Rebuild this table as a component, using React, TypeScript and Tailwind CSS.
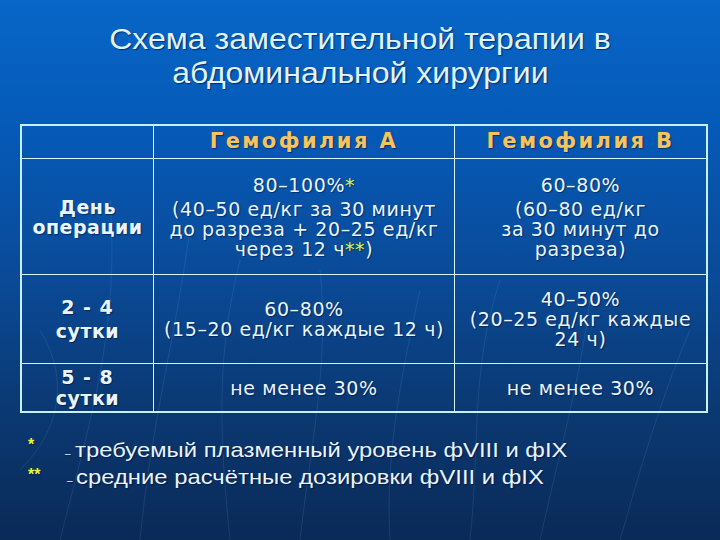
import React from 'react';

const Star = ({ children }: { children: React.ReactNode }) => (
  <span className="text-[#dcff3a]">{children}</span>
);

// faint curved streaks in the slide background
const BackgroundLines = () => (
  <svg className="absolute inset-0 pointer-events-none" width="720" height="540" viewBox="0 0 720 540">
    <g fill="none" stroke="#7fb2ff" strokeOpacity="0.14" strokeWidth="1">
      <path d="M60 540 C 90 420, 120 330, 110 200" />
      <path d="M140 540 C 150 430, 175 340, 190 230" />
      <path d="M230 540 C 220 440, 215 360, 240 260" />
      <path d="M300 540 C 310 450, 330 360, 320 270" />
      <path d="M390 540 C 385 460, 400 380, 420 290" />
      <path d="M470 540 C 480 450, 470 370, 500 280" />
      <path d="M540 540 C 560 450, 580 380, 590 300" />
      <path d="M620 540 C 640 470, 660 400, 690 330" />
      <path d="M20 470 C 60 430, 70 380, 40 330" />
    </g>
  </svg>
);

const cell = 'flex items-center justify-center text-center';
const line = 'border-[#d4f4ff]';
const body = 'text-[19px] leading-[20px] tracking-[0.6px]';

export default function App() {
  return (
    <div className="relative w-[720px] h-[540px] overflow-hidden bg-[linear-gradient(180deg,#0766c8_0%,#0659b6_25%,#0a4b99_50%,#0b3973_75%,#0a2a57_100%)]">
      <BackgroundLines />
      <div className="relative flex flex-col">
        <h1 className="pt-[22px] text-center text-[30px] leading-[34px] text-[#e0f3ff] font-['Liberation_Sans',sans-serif] [text-shadow:1px_1px_1px_rgba(0,0,40,0.5)]">
          <span className="inline-block scale-x-[1.067]">Схема заместительной терапии в</span>
          <br />
          <span className="inline-block scale-x-[1.067]">абдоминальной хирургии</span>
        </h1>

        <div className="mt-[34px] ml-[20px] w-[688px] border-2 border-[#c4f2ff] font-['DejaVu_Sans',sans-serif] text-[#eaf6ff] [text-shadow:1px_1px_1px_rgba(0,0,40,0.45)] grid grid-cols-[132px_301px_251px] grid-rows-[33px_116px_89px_47px]">
          <div className={`border-r border-b ${line}`} />
          <div className={`${cell} border-r border-b ${line} font-bold text-[21px] text-[#f7c35c]`}>
            <span className="tracking-[2.4px]">Гемофилия А</span>
          </div>
          <div className={`${cell} border-b ${line} font-bold text-[21px] text-[#f7c35c]`}>
            <span className="tracking-[2.4px]">Гемофилия В</span>
          </div>

          <div className={`${cell} border-r border-b ${line} font-bold text-[19px] leading-[20px] tracking-[0.5px]`}>
            <div>День<br />операции</div>
          </div>
          <div className={`${cell} border-r border-b ${line} ${body}`}>
            <div>
              <div className="mb-[4px]">80–100%<Star>*</Star></div>
              (40–50 ед/кг за 30 минут<br />
              до разреза + 20–25 ед/кг<br />
              через 12 ч<Star>**</Star>)
            </div>
          </div>
          <div className={`${cell} border-b ${line} ${body}`}>
            <div>
              <div className="mb-[4px]">60–80%</div>
              (60–80 ед/кг<br />
              за 30 минут до<br />
              разреза)
            </div>
          </div>

          <div className={`${cell} border-r border-b ${line} font-bold`}>
            <div className="-mt-[4px]">
              <div className="text-[19px] leading-[28px] tracking-[1px]">2 - 4</div>
              <div className="text-[19px] leading-[20px] tracking-[0.5px]">сутки</div>
            </div>
          </div>
          <div className={`${cell} border-r border-b ${line} ${body}`}>
            <div>
              60–80%<br />
              (15–20 ед/кг каждые 12 ч)
            </div>
          </div>
          <div className={`${cell} border-b ${line} ${body}`}>
            <div>
              40–50%<br />
              (20–25 ед/кг каждые<br />
              24 ч)
            </div>
          </div>

          <div className={`${cell} border-r ${line} font-bold`}>
            <div className="-mt-[1px]">
              <div className="text-[19px] leading-[21px] tracking-[1px]">5 - 8</div>
              <div className="text-[19px] leading-[20px] tracking-[0.5px]">сутки</div>
            </div>
          </div>
          <div className={`${cell} border-r ${line} ${body}`}>не менее 30%</div>
          <div className={`${cell} ${body}`}>не менее 30%</div>
        </div>

        <div className="mt-[25px] ml-[28px] text-[21px] leading-[23px] text-[#e8f4ff] font-['Liberation_Sans',sans-serif] [text-shadow:1px_1px_1px_rgba(0,0,40,0.5)]">
          <div className="flex items-baseline">
            <span className="w-[37px] text-[16px] font-bold text-[#eef23c] relative -top-[7px]">*</span>
            <span className="text-[10px] w-[10px]">–</span>
            <span className="inline-block origin-left scale-x-[1.135]">требуемый плазменный уровень фVIII и фIX</span>
          </div>
          <div className="flex items-baseline">
            <span className="w-[39px] text-[16px] font-bold text-[#eef23c] relative -top-[4px]">**</span>
            <span className="text-[10px] w-[9px]">–</span>
            <span className="inline-block origin-left scale-x-[1.135]">средние расчётные дозировки фVIII и фIX</span>
          </div>
        </div>
      </div>
    </div>
  );
}
